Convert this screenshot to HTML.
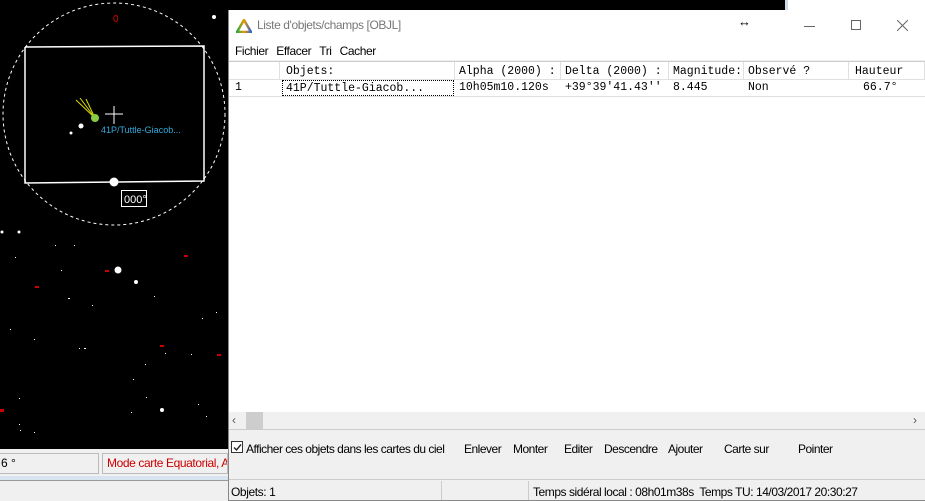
<!DOCTYPE html>
<html><head><style>
*{margin:0;padding:0;box-sizing:border-box}
body{width:925px;height:501px;position:relative;overflow:hidden;background:#000;font-family:"Liberation Sans",sans-serif;font-size:12px}
.a{position:absolute}
.mono{font-family:"Liberation Mono",monospace;font-size:11.5px}
.hc{position:absolute;top:62px;height:18px;border-right:1px solid #e0e0e0;border-bottom:1px solid #e0e0e0;padding:3px 0 0 6px}
.rc{position:absolute;top:80px;height:16px;padding:1px 0 0 6px}
.btn{position:absolute;top:442px;font-size:12px;letter-spacing:-0.5px}
</style></head><body>
<svg class="a" style="left:0;top:0" width="228" height="452">
<circle cx="114" cy="114" r="111" fill="none" stroke="#fff" stroke-dasharray="3,3"/>
<polyline points="25,47 204,46 204,181 25,183 25,47" fill="none" stroke="#fff" stroke-width="1.5"/>
<text x="113" y="22" fill="#d00" font-size="10" font-family="Liberation Sans">0</text>
<line x1="114" y1="106" x2="114" y2="124" stroke="#fff"/><line x1="105" y1="114" x2="123" y2="114" stroke="#fff"/>
<g stroke="#dd0" stroke-width="1"><line x1="95" y1="118" x2="76" y2="100"/><line x1="95" y1="118" x2="80" y2="98"/><line x1="95" y1="118" x2="86" y2="99"/></g>
<circle cx="95" cy="118" r="4" fill="#8c4"/>
<text x="101" y="133" fill="#3ad" font-size="9" font-family="Liberation Sans">41P/Tuttle-Giacob...</text>
<circle cx="114" cy="182" r="4.5" fill="#fff"/>
<rect x="121.5" y="190.5" width="25" height="16" fill="#000" stroke="#fff"/>
<text x="124" y="203" fill="#fff" font-size="11" font-family="Liberation Sans">000°</text>
<g fill="#fff"><circle cx="81" cy="126" r="2.5"/><circle cx="71" cy="133" r="1.5"/><circle cx="214" cy="17" r="2"/><circle cx="2" cy="232" r="1.5"/><circle cx="19" cy="232" r="1.5"/><circle cx="118" cy="270" r="3.5"/><circle cx="136" cy="282" r="2"/><circle cx="162" cy="410" r="2"/>
<rect x="15" y="257" width="1" height="1"/><rect x="61" y="270" width="1" height="1"/><rect x="68" y="298" width="2" height="1"/><rect x="92" y="305" width="1" height="1"/><rect x="10" y="329" width="1" height="1"/><rect x="34" y="339" width="1" height="1"/><rect x="79" y="348" width="1" height="1"/><rect x="84" y="348" width="2" height="1"/><rect x="165" y="353" width="1" height="1"/><rect x="191" y="354" width="1" height="1"/><rect x="145" y="364" width="1" height="1"/><rect x="133" y="379" width="1" height="1"/><rect x="146" y="397" width="1" height="1"/><rect x="198" y="404" width="1" height="1"/><rect x="206" y="416" width="1" height="1"/><rect x="19" y="398" width="1" height="1"/><rect x="19" y="424" width="1" height="1"/><rect x="20" y="430" width="1" height="1"/><rect x="34" y="432" width="1" height="1"/><rect x="131" y="412" width="1" height="1"/><rect x="202" y="318" width="1" height="1"/><rect x="216" y="312" width="1" height="1"/><rect x="154" y="296" width="1" height="1"/><rect x="55" y="245" width="1" height="1"/><rect x="74" y="245" width="1" height="1"/></g>
<g fill="#c00"><rect x="105" y="270" width="4" height="2"/><rect x="35" y="286" width="4" height="2"/><rect x="184" y="255" width="4" height="2"/><rect x="160" y="345" width="4" height="2"/><rect x="217" y="354" width="4" height="2"/><rect x="0" y="409" width="4" height="3"/></g>
</svg>
<div class="a" style="left:0;top:449px;width:228px;height:52px;background:#f0f0f0"></div>
<div class="a" style="left:0;top:453px;width:99px;height:21px;border:1px solid #bbb;border-left:none;background:#f0f0f0;padding:2px 0 0 1px;font-size:12px">6 °</div>
<div class="a" style="left:102px;top:453px;width:126px;height:21px;border:1px solid #bbb;background:#f0f0f0;padding:2px 0 0 4px;color:#c00;white-space:nowrap;overflow:hidden;font-size:12px;letter-spacing:-0.4px">Mode carte Equatorial, Az</div>
<div class="a" style="left:0;top:476px;width:228px;height:5px;background:#d8e4ef;border-bottom:1px solid #999"></div>
<div class="a" style="left:785px;top:0;width:140px;height:11px;background:#fff;border-left:3px solid #cdd9e6"></div>
<div class="a" style="left:228px;top:10px;width:697px;height:491px;background:#f0f0f0;border-left:1px solid #888"></div>
<div class="a" style="left:229px;top:10px;width:696px;height:50px;background:#fff"></div>
<svg class="a" style="left:236px;top:19px" width="16" height="14"><defs><linearGradient id="g" x1="0" x2="1"><stop offset="0" stop-color="#2a4"/><stop offset=".5" stop-color="#e90"/><stop offset="1" stop-color="#36c"/></linearGradient></defs><path d="M8 1 L15 13 L1 13 Z" fill="none" stroke="url(#g)" stroke-width="2.5"/></svg>
<div class="a" style="left:257px;top:18px;color:#777;font-size:12px;letter-spacing:-0.4px">Liste d'objets/champs [OBJL]</div>
<div class="a" style="left:738px;top:14px;font-size:13px">↔</div>
<div class="a" style="left:804px;top:26px;width:11px;height:1px;background:#666"></div>
<div class="a" style="left:851px;top:20px;width:10px;height:10px;border:1px solid #666"></div>
<svg class="a" style="left:897px;top:20px" width="11" height="11"><path d="M0 0L11 11M11 0L0 11" stroke="#666"/></svg>
<div class="a" style="left:235px;top:44px;font-size:12px;letter-spacing:-0.4px"><span>Fichier</span><span style="margin-left:8px">Effacer</span><span style="margin-left:8px">Tri</span><span style="margin-left:8px">Cacher</span></div>
<div class="a" style="left:229px;top:61px;width:696px;height:368px;background:#fff;border-top:1px solid #ccc"></div>
<div class="hc mono" style="left:229px;width:51px"></div>
<div class="hc mono" style="left:280px;width:175px">Objets:</div>
<div class="hc mono" style="left:455px;width:106px;white-space:nowrap;overflow:hidden;padding-left:4px">Alpha (2000) :</div>
<div class="hc mono" style="left:561px;width:108px;white-space:nowrap;overflow:hidden;padding-left:4px">Delta (2000) :</div>
<div class="hc mono" style="left:669px;width:75px;white-space:nowrap;overflow:hidden;padding-left:4px">Magnitude:</div>
<div class="hc mono" style="left:744px;width:105px;padding-left:4px">Observé ?</div>
<div class="hc mono" style="left:849px;width:76px">Hauteur</div>
<div class="a" style="left:229px;top:96px;width:696px;height:1px;background:#e0e0e0"></div>
<div class="rc mono" style="left:229px">1</div>
<div class="rc mono" style="left:282px;width:172px;border:1px dotted #000;padding-left:3px">41P/Tuttle-Giacob...</div>
<div class="rc mono" style="left:455px;padding-left:4px">10h05m10.120s</div>
<div class="rc mono" style="left:561px;padding-left:4px">+39°39'41.43''</div>
<div class="rc mono" style="left:669px;padding-left:4px">8.445</div>
<div class="rc mono" style="left:744px;padding-left:4px">Non</div>
<div class="rc mono" style="left:857px">66.7°</div>
<div class="a" style="left:229px;top:412px;width:696px;height:17px;background:#f0f0f0"></div>
<div class="a" style="left:246px;top:412px;width:17px;height:17px;background:#cdcdcd"></div>
<div class="a" style="left:232px;top:413px;color:#555;font-size:12px">‹</div>
<div class="a" style="left:913px;top:413px;color:#555;font-size:12px">›</div>
<div class="a" style="left:229px;top:429px;width:696px;height:1px;background:#ccc"></div>
<div class="a" style="left:231px;top:441px;width:12px;height:12px;border:1px solid #333;background:#fff"></div>
<svg class="a" style="left:232px;top:442px" width="11" height="11"><path d="M2 5.5 L4.5 8 L9 2.5" fill="none" stroke="#222" stroke-width="1.4"/></svg>
<div class="btn" style="left:246px">Afficher ces objets dans les cartes du ciel</div>
<div class="btn" style="left:464px">Enlever</div>
<div class="btn" style="left:513px">Monter</div>
<div class="btn" style="left:564px">Editer</div>
<div class="btn" style="left:604px">Descendre</div>
<div class="btn" style="left:668px">Ajouter</div>
<div class="btn" style="left:724px">Carte sur</div>
<div class="btn" style="left:798px">Pointer</div>
<div class="a" style="left:229px;top:479px;width:696px;height:1px;background:#ccc"></div>
<div class="a" style="left:231px;top:485px;font-size:12px;letter-spacing:-0.4px">Objets: 1</div>
<div class="a" style="left:441px;top:481px;width:1px;height:19px;background:#ccc"></div>
<div class="a" style="left:528px;top:481px;width:1px;height:19px;background:#ccc"></div>
<div class="a" style="left:533px;top:485px;font-size:12px;letter-spacing:-0.45px">Temps sidéral local : 08h01m38s&nbsp; Temps TU: 14/03/2017 20:30:27</div>
<div class="a" style="left:228px;top:500px;width:697px;height:1px;background:#888"></div>
</body></html>
